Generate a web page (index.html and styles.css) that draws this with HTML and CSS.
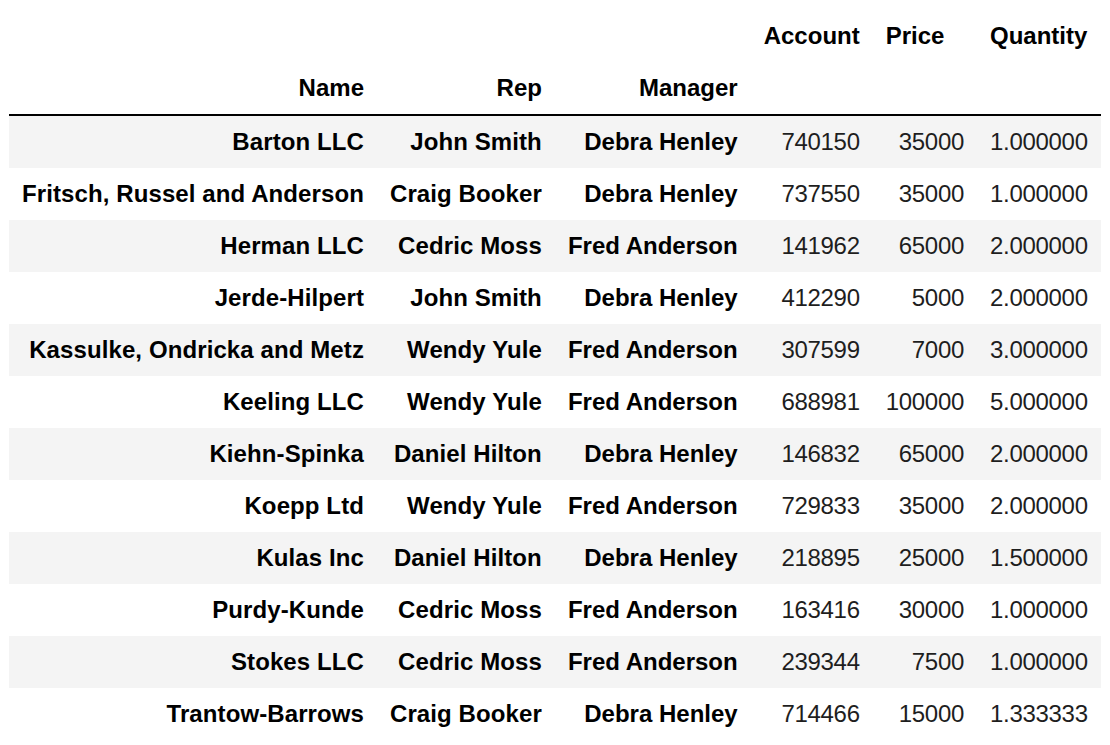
FILE: index.html
```html
<!DOCTYPE html>
<html>
<head>
<meta charset="utf-8">
<link rel="stylesheet" href="styles.css">
</head>
<body>
<table class="df">
  <thead>
    <tr>
      <th></th>
      <th></th>
      <th></th>
      <th class="col">Account</th>
      <th class="col">Price</th>
      <th class="col">Quantity</th>
    </tr>
    <tr>
      <th class="idxname">Name</th>
      <th class="idxname">Rep</th>
      <th class="idxname">Manager</th>
      <th></th>
      <th></th>
      <th></th>
    </tr>
  </thead>
  <tbody>
    <tr><th>Barton LLC</th><th>John Smith</th><th>Debra Henley</th><td>740150</td><td>35000</td><td>1.000000</td></tr>
    <tr><th>Fritsch, Russel and Anderson</th><th>Craig Booker</th><th>Debra Henley</th><td>737550</td><td>35000</td><td>1.000000</td></tr>
    <tr><th>Herman LLC</th><th>Cedric Moss</th><th>Fred Anderson</th><td>141962</td><td>65000</td><td>2.000000</td></tr>
    <tr><th>Jerde-Hilpert</th><th>John Smith</th><th>Debra Henley</th><td>412290</td><td>5000</td><td>2.000000</td></tr>
    <tr><th>Kassulke, Ondricka and Metz</th><th>Wendy Yule</th><th>Fred Anderson</th><td>307599</td><td>7000</td><td>3.000000</td></tr>
    <tr><th>Keeling LLC</th><th>Wendy Yule</th><th>Fred Anderson</th><td>688981</td><td>100000</td><td>5.000000</td></tr>
    <tr><th>Kiehn-Spinka</th><th>Daniel Hilton</th><th>Debra Henley</th><td>146832</td><td>65000</td><td>2.000000</td></tr>
    <tr><th>Koepp Ltd</th><th>Wendy Yule</th><th>Fred Anderson</th><td>729833</td><td>35000</td><td>2.000000</td></tr>
    <tr><th>Kulas Inc</th><th>Daniel Hilton</th><th>Debra Henley</th><td>218895</td><td>25000</td><td>1.500000</td></tr>
    <tr><th>Purdy-Kunde</th><th>Cedric Moss</th><th>Fred Anderson</th><td>163416</td><td>30000</td><td>1.000000</td></tr>
    <tr><th>Stokes LLC</th><th>Cedric Moss</th><th>Fred Anderson</th><td>239344</td><td>7500</td><td>1.000000</td></tr>
    <tr><th>Trantow-Barrows</th><th>Craig Booker</th><th>Debra Henley</th><td>714466</td><td>15000</td><td>1.333333</td></tr>
  </tbody>
</table>
</body>
</html>
```

FILE: styles.css
```css
html, body {
  background: #ffffff;
}

body {
  margin: 10px 8px 0 9px;
  font-family: "Liberation Sans", Arial, sans-serif;
  font-size: 24px;
  color: #000000;
}

.df {
  border-collapse: collapse;
  border-spacing: 0;
  border: none;
  table-layout: auto;
}

.df th,
.df td {
  padding: 12px 13px;
  line-height: 28px;
  text-align: right;
  vertical-align: middle;
  white-space: nowrap;
  border: none;
}

.df th {
  font-weight: bold;
  color: #000000;
}

.df tbody th:nth-child(-n+2) {
  letter-spacing: 0.1px;
}

.df td {
  font-weight: normal;
  color: #1e1e1e;
  letter-spacing: -0.3px;
}

.df thead {
  border-bottom: 2px solid #000000;
}

.df thead th.col {
  text-align: left;
}

.df tbody tr:nth-child(odd) {
  background: #f4f4f4;
}
```
